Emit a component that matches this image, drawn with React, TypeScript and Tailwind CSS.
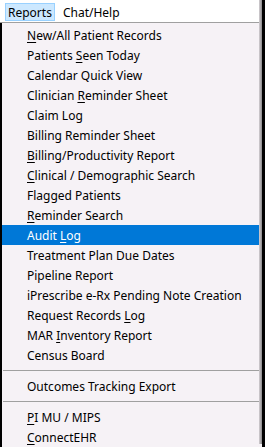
import React from "react";

// Each entry: label split as [before, mnemonic, after]
type Item =
  | { kind: "item"; pre: string; key?: string; post?: string; active?: boolean }
  | { kind: "sep" };

const items: Item[] = [
  { kind: "item", pre: "", key: "N", post: "ew/All Patient Records" },
  { kind: "item", pre: "Patients ", key: "S", post: "een Today" },
  { kind: "item", pre: "Calendar Quick View" },
  { kind: "item", pre: "Clinician ", key: "R", post: "eminder Sheet" },
  { kind: "item", pre: "Claim Log" },
  { kind: "item", pre: "Billing Reminder Sheet" },
  { kind: "item", pre: "", key: "B", post: "illing/Productivity Report" },
  { kind: "item", pre: "", key: "C", post: "linical / Demographic Search" },
  { kind: "item", pre: "Flagged Patients" },
  { kind: "item", pre: "", key: "R", post: "eminder Search" },
  { kind: "item", pre: "Audit ", key: "L", post: "og", active: true },
  { kind: "item", pre: "Treatment Plan Due Dates" },
  { kind: "item", pre: "Pipeline Report" },
  { kind: "item", pre: "iPrescribe e-Rx Pending Note Creation" },
  { kind: "item", pre: "Request Records ", key: "L", post: "og" },
  { kind: "item", pre: "MAR ", key: "I", post: "nventory Report" },
  { kind: "item", pre: "Census Board" },
  { kind: "sep" },
  { kind: "item", pre: "Outcomes Tracking Export" },
  { kind: "sep" },
  { kind: "item", pre: "", key: "P", post: "I MU / MIPS" },
  { kind: "item", pre: "", key: "C", post: "onnectEHR" },
];

export default function App() {
  return (
    <div
      className="relative w-[265px] h-[447px] overflow-hidden bg-black flex flex-col text-[12px] text-black"
      style={{ fontFamily: "'Noto Sans', 'Open Sans', sans-serif" }}
    >
      {/* ── Menu bar ─────────────────────────────── */}
      <div className="h-[22px] mr-[3px] bg-white flex items-start gap-[5px] pl-[5px] pt-[3px]">
        <div className="h-[18px] px-[2px] pt-px flex items-center border border-[#99d1ff] bg-[#cce8ff]">
          Reports
        </div>
        <div className="h-[18px] px-[2px] pt-px flex items-center border border-transparent">
          Chat/Help
        </div>
      </div>
      <div className="h-px mr-[3px] bg-[#a0a0a0]" />

      {/* ── Dropdown ─────────────────────────────── */}
      <div className="flex-1 ml-[2px] mr-[3px] bg-[#f6f2f6] pt-[2px] flex flex-col">
        {items.map((it, i) =>
          it.kind === "sep" ? (
            <div key={i} className="h-[11px] shrink-0 flex items-center pl-[1px] pr-[3px]">
              <div className="h-px w-full bg-[#a0a0a0]" />
            </div>
          ) : (
            <div
              key={i}
              className={`h-[20px] shrink-0 flex items-center pl-[25px] pt-[2px] whitespace-nowrap mr-[3px] ${
                it.active ? "bg-[#0078d7] text-white" : ""
              }`}
            >
              <span>
                {it.pre}
                {it.key && (
                  <span className="underline underline-offset-2 decoration-1">{it.key}</span>
                )}
                {it.post}
              </span>
            </div>
          )
        )}
      </div>

      {/* drop shadow on right edge */}
      <div className="absolute top-0 bottom-[3px] right-[3px] w-[3px] bg-gradient-to-r from-[#d4d0d4] to-[#8a888a]" />
    </div>
  );
}
